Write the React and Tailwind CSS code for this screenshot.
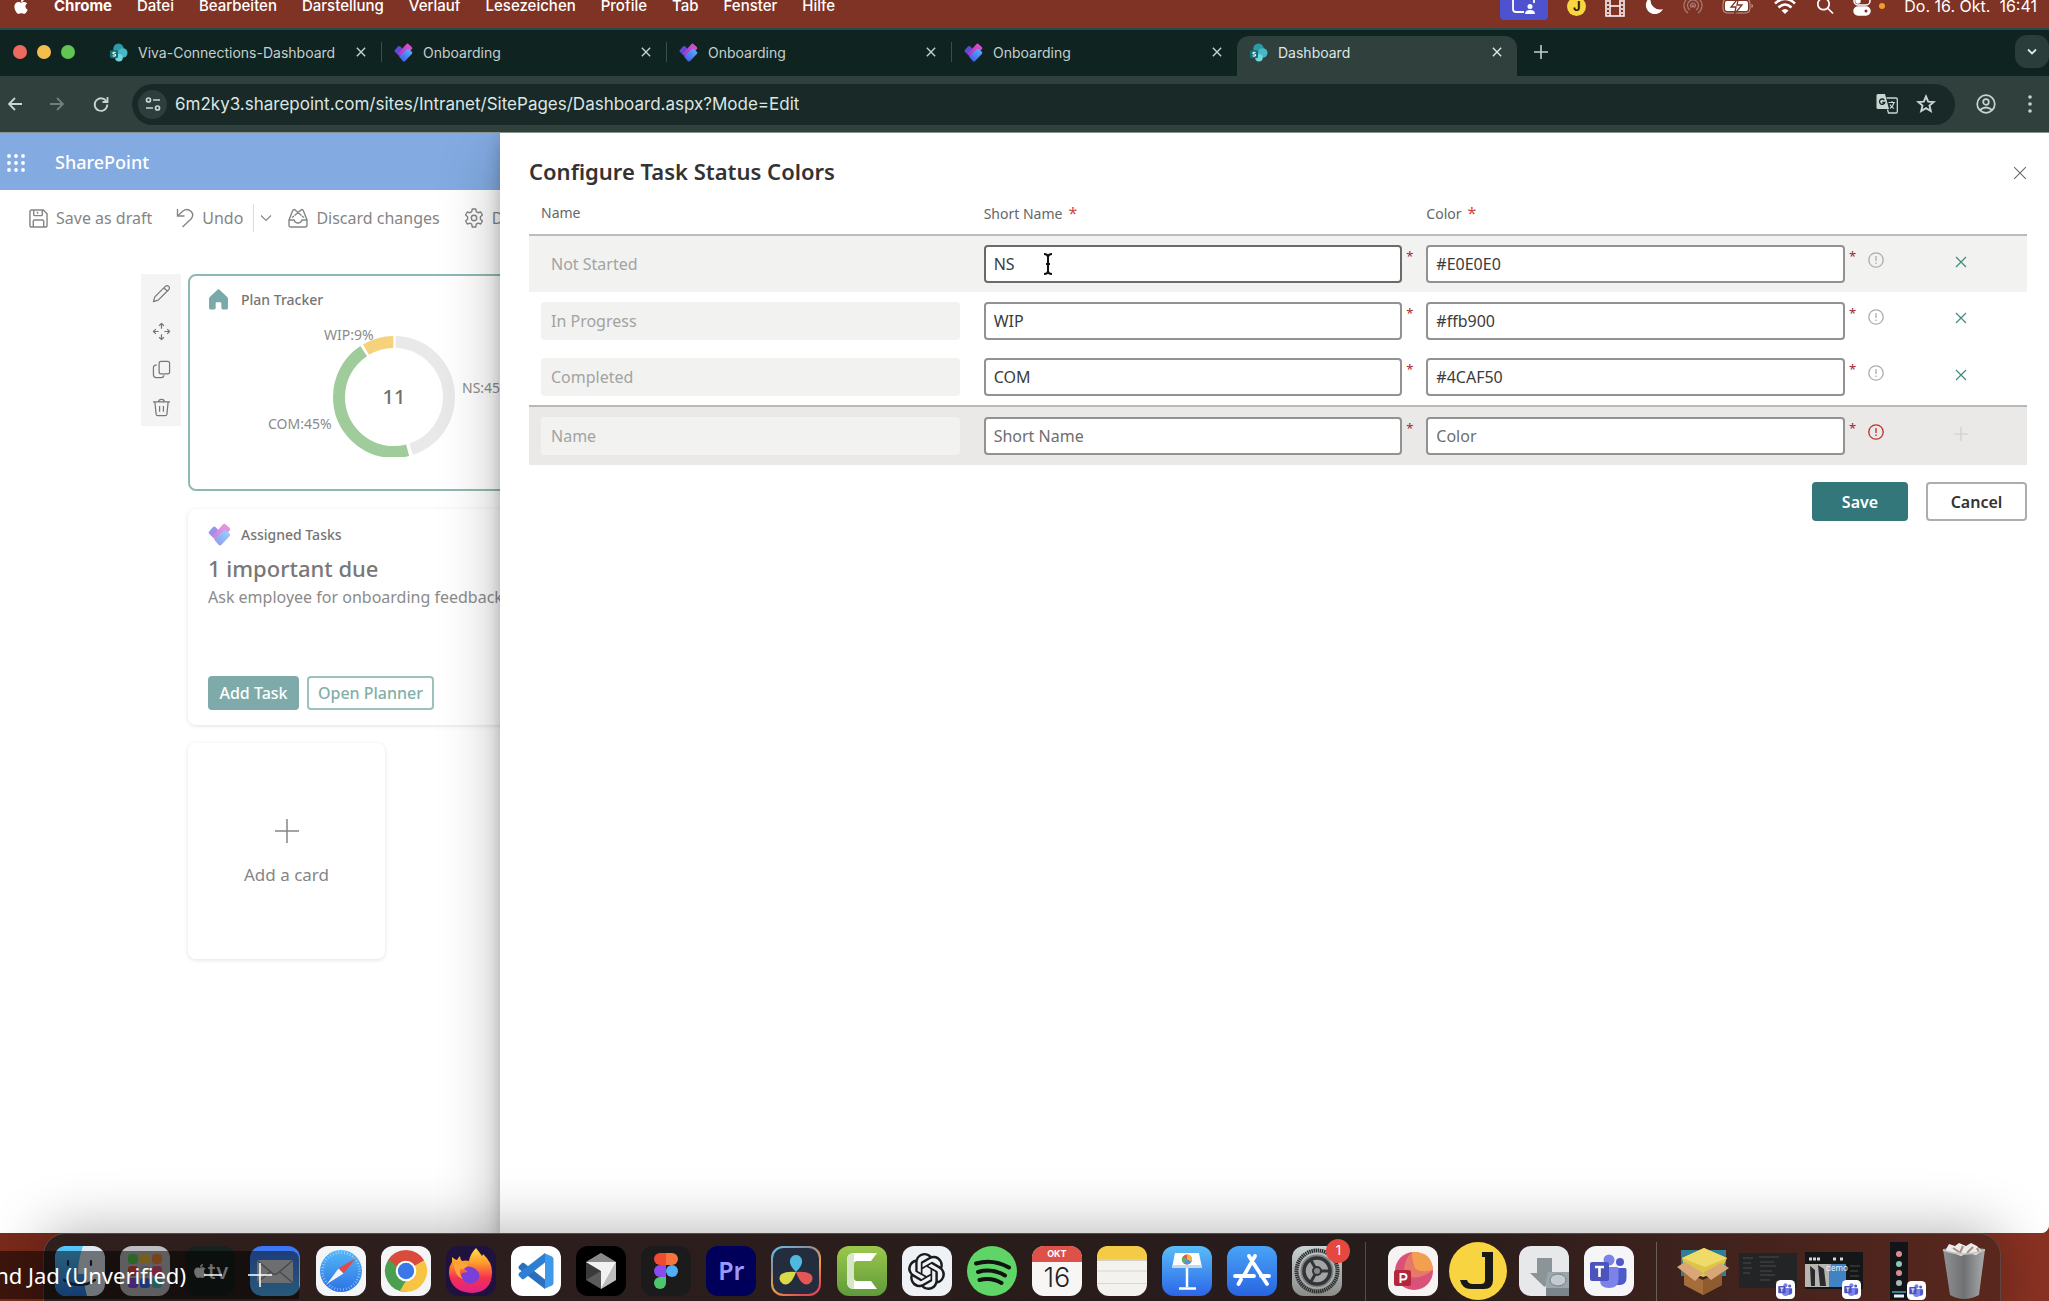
import React from "react";
import { FaApple } from "react-icons/fa";
import { SiOpenai } from "react-icons/si";

const UI = "font-['Noto_Sans','Open_Sans',sans-serif]";
const MAC = "font-['Inter',sans-serif]";

/* ---------- small shared drawings ---------- */

function Cross({ className, w = 1.6 }) {
  return (
    <svg viewBox="0 0 12 12" className={className} fill="none" stroke="currentColor" strokeWidth={w}>
      <path d="M1 1l10 10M11 1L1 11" />
    </svg>
  );
}

function VivaLogo({ id, className }) {
  return (
    <svg viewBox="0 0 24 24" className={className}>
      <defs>
        <linearGradient id={id + "a"} x1="0" y1="0" x2="1" y2="1">
          <stop offset="0" stopColor="#4a5ce0" />
          <stop offset="1" stopColor="#7a2fc9" />
        </linearGradient>
        <linearGradient id={id + "b"} x1="1" y1="0" x2="0" y2="1">
          <stop offset="0" stopColor="#e457c6" />
          <stop offset="1" stopColor="#9a2fd0" />
        </linearGradient>
        <linearGradient id={id + "c"} x1="1" y1="0" x2="0" y2="1">
          <stop offset="0" stopColor="#58b8fb" />
          <stop offset="1" stopColor="#4253e8" />
        </linearGradient>
      </defs>
      <path fill={"url(#" + id + "a)"} d="M1 9l4-4.500q1.500-1.500 3 0l4.500 4.500-6 7.500L1 11q-1-1 0-2z" />
      <path fill={"url(#" + id + "b)"} d="M4.500 14L15.500 1.500q1.500-1.500 3 0l4 3.500q1.300 1.500 0 3L11 20z" />
      <path fill={"url(#" + id + "c)"} d="M7 16.500l9-8.500q1.500-1.300 3 0l3.500 3q1.200 1.400 0 2.800l-8.500 9q-1.500 1.300-3 0L7 18q-.8-.8 0-1.500z" />
    </svg>
  );
}

function SharePointLogo({ className }) {
  return (
    <svg viewBox="0 0 20 20" className={className}>
      <circle cx="10" cy="6" r="5.500" fill="#2f9aa5" />
      <circle cx="14.500" cy="10.500" r="5" fill="#45b9c6" />
      <circle cx="10.500" cy="15.500" r="4" fill="#6fd6de" />
      <rect x="1" y="7.500" width="8.500" height="8.500" rx="1.500" fill="#136f79" />
      <path d="M7 10.200c-.8-.8-3-.8-3 .4 0 1.300 3 .8 3 2.200 0 1.200-2.300 1.300-3.200.4" fill="none" stroke="#fff" strokeWidth="1.100" />
    </svg>
  );
}

/* ---------- macOS menu bar ---------- */

const menus = ["Datei", "Bearbeiten", "Darstellung", "Verlauf", "Lesezeichen", "Profile", "Tab", "Fenster", "Hilfe"];

function MenuBar() {
  return (
    <header className={"h-7 bg-[#7f3325] leading-3 text-white " + MAC}>
      <div className="flex h-3 items-center justify-between pr-3">
        <nav className="flex items-center gap-[25px] pl-3 text-[15px] leading-3 font-medium" aria-label="Menu bar">
          <FaApple className="-mr-px size-[18px]" />
          <button className="font-bold">Chrome</button>
          {menus.map((m) => (
            <button key={m}>{m}</button>
          ))}
        </nav>
        <div className="flex items-center gap-[19px]">
          <span className="flex h-7 w-12 items-center justify-center rounded bg-[#4f52cf]">
            <svg viewBox="0 0 24 20" className="h-5 w-6" fill="none" stroke="#fff" strokeWidth="1.800">
              <path d="M12 16H4q-3 0-3-3V1h21v6" />
              <circle cx="18" cy="10.500" r="2.500" fill="#fff" stroke="none" />
              <path d="M13 18q0-4 5-4t5 4z" fill="#fff" stroke="none" />
            </svg>
          </span>
          <span className="flex size-[19px] items-center justify-center rounded-full bg-[#f8d541] text-[13px] leading-3 font-bold text-[#2a2208]">J</span>
          <svg viewBox="0 0 20 22" className="h-[22px] w-5" fill="none" stroke="#fff" strokeWidth="1.500">
            <path d="M1 1v20h18V1M5 1v20M15 1v20M5 11h10" />
            <path d="M3 1v20M17 1v20" strokeDasharray="2 2" />
          </svg>
          <svg viewBox="0 0 20 20" className="size-5" fill="#fff">
            <path d="M7 1a9 9 0 1 0 12 12A9.500 9.500 0 0 1 7 1z" />
          </svg>
          <svg viewBox="0 0 20 20" className="size-5 opacity-35" fill="none" stroke="#fff" strokeWidth="1.200">
            <path d="M5 17a9 9 0 1 1 10 0M7 14a5.500 5.500 0 1 1 6 0M8.500 11.500a2.500 2.500 0 1 1 3 0" />
            <circle cx="10" cy="10" r="1" fill="#fff" />
          </svg>
          <svg viewBox="0 0 32 18" className="h-[18px] w-8">
            <rect x="1" y="2" width="27" height="14" rx="4" fill="none" stroke="#fff" strokeOpacity=".5" />
            <path d="M29.500 7v4q1.500-.6 1.500-2t-1.500-2z" fill="#fff" fillOpacity=".5" />
            <rect x="3" y="4" width="23" height="10" rx="2" fill="#fff" />
            <path d="M16.500 1L9 10h5l-1.500 7L20 8h-5z" fill="#fff" stroke="#7f3325" strokeWidth="1.300" />
          </svg>
          <svg viewBox="0 0 24 18" className="h-[18px] w-6" fill="none" stroke="#fff" strokeWidth="2.600">
            <path d="M2 6.500Q12-2.500 22 6.500M5.500 10.500q6.500-6 13 0" />
            <path d="M8.500 13.500q3.500-3 7 0L12 17z" fill="#fff" stroke="none" />
          </svg>
          <svg viewBox="0 0 18 18" className="size-[18px]" fill="none" stroke="#fff" strokeWidth="1.700">
            <circle cx="7.500" cy="7" r="5.700" />
            <path d="M12 11.500l5 5" />
          </svg>
          <div className="flex items-center gap-2">
            <svg viewBox="0 0 18 20" className="h-5 w-[18px]" fill="none" stroke="#fff" strokeWidth="1.500">
              <rect x="1" y="1" width="16" height="8" rx="4" />
              <circle cx="5" cy="5" r="2" fill="#fff" />
              <rect x="1" y="11" width="16" height="8" rx="4" fill="#fff" />
              <circle cx="13" cy="15" r="2.300" fill="#7f3325" />
            </svg>
            <span className="size-[6px] rounded-full bg-[#f59a2c]" />
          </div>
          <span className="text-[16px] leading-3 whitespace-pre">Do. 16. Okt.  16:41</span>
        </div>
      </div>
    </header>
  );
}

/* ---------- browser chrome ---------- */

const tabs = [
  { title: "Viva-Connections-Dashboard", icon: "sp", sep: true },
  { title: "Onboarding", icon: "viva", sep: true },
  { title: "Onboarding", icon: "viva", sep: true },
  { title: "Onboarding", icon: "viva" },
  { title: "Dashboard", icon: "sp", active: true },
];

function TabStrip() {
  return (
    <div className="flex h-12 items-end border-t-2 border-[#2c4a4d] bg-[#0f2321] text-[14px] text-[#c3d0cd]">
      <div className="flex h-10 w-[97px] shrink-0 items-start gap-2.5 pt-[9px] pl-[13px]">
        <span className="size-3.5 rounded-full bg-[#ed6a5e]" />
        <span className="size-3.5 rounded-full bg-[#f4be4f]" />
        <span className="size-3.5 rounded-full bg-[#61c554]" />
      </div>
      <div className="flex h-10 min-w-0 shrink" role="tablist">
        {tabs.map((t, i) => (
          <div
            key={i}
            className={
              t.active
                ? "flex w-[280px] rounded-t-xl bg-[#2f403d] pb-2 text-[#dce6e3]"
                : "flex w-[285px] pb-2"
            }
          >
            <button role="tab" aria-selected={!!t.active} className="flex min-w-0 flex-1 items-center gap-2.5 pl-3">
              {t.icon === "sp" ? <SharePointLogo className="size-[19px]" /> : <VivaLogo id={"t" + i} className="size-[19px]" />}
              <span className="truncate">{t.title}</span>
            </button>
            <button aria-label="Close tab" className="flex w-10 items-center justify-center">
              <Cross className="size-2.5" w={1.7} />
            </button>
            {t.sep && <span className="my-1.5 w-px bg-[#33514d]" />}
          </div>
        ))}
      </div>
      <button aria-label="New tab" className="flex h-10 w-12 items-center justify-center pb-2">
        <svg viewBox="0 0 14 14" className="size-3.5" stroke="currentColor" strokeWidth="1.600">
          <path d="M7 0v14M0 7h14" />
        </svg>
      </button>
      <button aria-label="Search tabs" className="mb-2 ml-auto flex h-[33px] w-[34px] items-center justify-center rounded-xl bg-[#2a3d3a]">
        <svg viewBox="0 0 12 8" className="h-2 w-3" fill="none" stroke="#dfe8e6" strokeWidth="1.800">
          <path d="M2 1.500l4 4 4-4" />
        </svg>
      </button>
    </div>
  );
}

function Toolbar() {
  return (
    <div className="flex h-[56px] items-center bg-[#2f403d] text-[#c9d5d2]">
      <div className="flex w-[132px] items-center gap-5 pl-1.5">
        <button aria-label="Back">
          <svg viewBox="0 0 18 18" className="size-[18px]" fill="none" stroke="currentColor" strokeWidth="1.800">
            <path d="M16 9H3M9 3L3 9l6 6" />
          </svg>
        </button>
        <button aria-label="Forward" className="pl-1 text-[#70807c]">
          <svg viewBox="0 0 18 18" className="size-[18px]" fill="none" stroke="currentColor" strokeWidth="1.800">
            <path d="M2 9h13M9 3l6 6-6 6" />
          </svg>
        </button>
        <button aria-label="Reload" className="pl-1.5">
          <svg viewBox="0 0 18 18" className="size-[18px]" fill="none" stroke="currentColor" strokeWidth="1.800">
            <path d="M14.500 6.500A6.300 6.300 0 1 0 15.300 9.500" />
            <path d="M15.500 2v5h-5" />
          </svg>
        </button>
      </div>
      <div className="flex h-[41px] min-w-0 flex-1 items-center rounded-full bg-[#182927] pr-[19px] pl-1.5">
        <span className="flex size-[29px] items-center justify-center rounded-full bg-[#2d3f3c]">
          <svg viewBox="0 0 16 16" className="size-4" fill="none" stroke="currentColor" strokeWidth="1.700">
            <circle cx="3.500" cy="4" r="2" />
            <path d="M8 4h7M1 12h7" />
            <circle cx="12.500" cy="12" r="2" />
          </svg>
        </span>
        <input
          aria-label="Address"
          className={"h-full min-w-0 flex-1 bg-transparent pl-2 text-[17px] text-[#dce6e4] outline-none " + MAC}
          defaultValue="6m2ky3.sharepoint.com/sites/Intranet/SitePages/Dashboard.aspx?Mode=Edit"
        />
        <div className="flex items-center gap-[18px]">
          <svg viewBox="0 0 22 20" className="h-5 w-[22px]">
            <path d="M2 0h7l4 15H2q-1.500 0-1.500-1.500v-12Q.5 0 2 0z" fill="#c9d5d2" />
            <path d="M10.500 4H20q1.300 0 1.300 1.300v12.400Q21.300 19 20 19h-7.500l-1-3.500" fill="none" stroke="#c9d5d2" strokeWidth="1.300" />
            <path d="M8.300 6a2.700 2.700 0 1 0 .5 2.500H6.300" fill="none" stroke="#182927" strokeWidth="1.300" />
            <path d="M12.500 8.500H19M16 7v1.500M18 8.500q-1 4-4 6M14 10.500q1.500 3 4 4" fill="none" stroke="#c9d5d2" strokeWidth="1.200" />
          </svg>
          <button aria-label="Bookmark">
            <svg viewBox="0 0 20 20" className="size-5" fill="none" stroke="currentColor" strokeWidth="1.900">
              <path d="M10 2.500l2.200 5.100 5.500.4-4.200 3.600 1.300 5.400-4.800-2.900L5.200 17l1.300-5.400L2.300 8l5.500-.4z" />
            </svg>
          </button>
        </div>
      </div>
      <div className="flex w-[94px] items-center justify-between pr-[17px] pl-[21px]">
        <button aria-label="Profile">
          <svg viewBox="0 0 20 20" className="size-5" fill="none" stroke="currentColor" strokeWidth="1.700">
            <circle cx="10" cy="10" r="8.800" />
            <circle cx="10" cy="8" r="2.800" />
            <path d="M4 16q6-5 12 0" />
          </svg>
        </button>
        <button aria-label="Menu">
          <svg viewBox="0 0 4 18" className="h-[18px] w-1 fill-current">
            <circle cx="2" cy="2" r="1.800" />
            <circle cx="2" cy="9" r="1.800" />
            <circle cx="2" cy="16" r="1.800" />
          </svg>
        </button>
      </div>
    </div>
  );
}

/* ---------- dashboard behind the panel ---------- */

function CommandBar() {
  return (
    <div className="flex h-[56px] items-center pl-[29px] text-[16px] whitespace-nowrap text-[#858585]">
      <button className="flex items-center gap-2">
        <svg viewBox="0 0 20 20" className="size-[19px]" fill="none" stroke="currentColor" strokeWidth="1.500">
          <path d="M3 1h12l4 4v12q0 2-2 2H3q-2 0-2-2V3q0-2 2-2z" />
          <path d="M5 1v5q0 1 1 1h7q1 0 1-1V1M4.500 19v-6q0-1.500 1.500-1.500h8q1.500 0 1.500 1.500v6M9 3v2" />
        </svg>
        Save as draft
      </button>
      <button className="ml-6 flex items-center gap-2">
        <svg viewBox="0 0 18 20" className="h-5 w-[18px]" fill="none" stroke="currentColor" strokeWidth="1.400">
          <path d="M1.500 1v7h7" />
          <path d="M1.500 8L7 3q4-3.200 8 .3 3.500 3.700 0 7.700L6.500 19" />
        </svg>
        Undo
      </button>
      <button aria-label="More undo options" className="ml-2.5 flex h-7 items-center border-l border-[#dcdcdc] pl-1.5">
        <svg viewBox="0 0 12 8" className="h-2 w-3" fill="none" stroke="currentColor" strokeWidth="1.100">
          <path d="M1 1.500l5 5 5-5" />
        </svg>
      </button>
      <button className="ml-4 flex items-center gap-2">
        <svg viewBox="0 0 20 20" className="size-5" fill="none" stroke="currentColor" strokeWidth="1.400">
          <path d="M1 12L4.500 3Q5 1.500 6.500 1.500M19 12L15.500 3q-.5-1.500-2-1.500M6.500 1.500l7 6M13.500 1.500l-7 6M1 12h5q1 3 4 3t4-3h5v5q0 2-2 2H3q-2 0-2-2zM4 9.500l2-1.500M16 9.500L14 8" />
        </svg>
        Discard changes
      </button>
      <button className="ml-6 flex items-center gap-2">
        <svg viewBox="0 0 20 20" className="size-5" fill="none" stroke="currentColor" strokeWidth="1.400">
          <path d="M8.300 1h3.400l.6 2.700 1.700 1L16.700 4l1.700 3-2 1.800v2.400l2 1.800-1.700 3-2.700-.8-1.700 1-.6 2.800H8.300l-.6-2.800-1.700-1-2.700.8-1.700-3 2-1.800V8.800L1.600 7l1.700-3 2.700.7 1.700-1z" strokeLinejoin="round" />
          <circle cx="10" cy="10" r="2.700" />
        </svg>
        D
      </button>
    </div>
  );
}

const cardTools = [
  { label: "Edit", d: "M1.500 18.500l1.500-5L14 2.500q1.800-1.500 3.500 0t0 3.500L6.500 17zM12.500 4l3.500 3.500" },
  { label: "Move", d: "M10 1.500v5.500M10 13v5.500M1.500 10H7M13 10h5.500M7.500 4L10 1.500 12.500 4M7.500 16l2.500 2.500 2.500-2.500M4 7.500L1.500 10 4 12.500M16 7.500l2.500 2.500-2.500 2.500" },
  { label: "Duplicate", d: "M9.500 1.500h7q2 0 2 2v9q0 2-2 2h-7q-2 0-2-2v-9q0-2 2-2zM5 5.500H4q-2.500 0-2.500 2.500v7.500q0 3 3 3h5q3 0 3-2.500" },
  { label: "Delete", d: "M1 4h18M7 4q0-2.500 3-2.500T13 4M3 4l1.300 13q.2 1.500 1.700 1.500h8q1.500 0 1.700-1.500L17 4M8 8.500v6M12 8.500v6" },
];

function Ring() {
  return (
    <svg viewBox="0 0 293 140" className="mt-[7px] h-[140px] w-[293px]" fill="none" strokeWidth="12" role="img" aria-label="Task status">
      <circle cx="186" cy="80" r="55" stroke="#e9e9e9" pathLength="100" strokeDasharray="44.400 55.600" strokeDashoffset="-.5" transform="rotate(-90 186 80)" />
      <circle cx="186" cy="80" r="55" stroke="#a0cc9b" pathLength="100" strokeDasharray="44.700 55.300" strokeDashoffset="-46" transform="rotate(-90 186 80)" />
      <circle cx="186" cy="80" r="55" stroke="#f6d27c" pathLength="100" strokeDasharray="8.300 91.700" strokeDashoffset="-91.500" transform="rotate(-90 186 80)" />
      <g stroke="none" fill="#8b8b8b" fontSize="14">
        <text x="116" y="23">WIP:9%</text>
        <text x="60" y="112">COM:45%</text>
        <text x="254" y="76">NS:45%</text>
        <text x="186" y="87" fontSize="20" fontWeight="500" fill="#6f6f6f" textAnchor="middle">11</text>
      </g>
    </svg>
  );
}

function Dashboard() {
  return (
    <section className={"w-[500px] shrink-0 overflow-hidden bg-white " + UI}>
      <div className="flex h-[57px] items-center gap-[30px] bg-[#83abe2] pt-0.5 pl-[7px] text-white">
        <svg viewBox="0 0 18 18" className="size-[18px]" fill="#fff">
          {[2, 9, 16].map((x) => [2, 9, 16].map((y) => <circle key={x + "-" + y} cx={x} cy={y} r="1.900" />))}
        </svg>
        <span className="text-[18px] font-medium">SharePoint</span>
      </div>
      <CommandBar />
      <div className="flex items-start gap-[7px] pt-7 pl-[141px]">
        <div className="flex w-10 shrink-0 flex-col items-center bg-[#f4f4f4]">
          {cardTools.map((t) => (
            <button key={t.label} aria-label={t.label} className="flex h-[38px] items-center text-[#777]">
              <svg viewBox="0 0 20 20" className="size-[19px]" fill="none" stroke="currentColor" strokeWidth="1.300" strokeLinejoin="round">
                <path d={t.d} />
              </svg>
            </button>
          ))}
        </div>
        <div className="flex w-[413px] shrink-0 flex-col gap-[18px]">
          <article className="h-[217px] rounded-lg border-2 border-[#8fb8b2] pt-[13px] pl-[18px]">
            <h3 className="flex items-center gap-3 text-[14px] font-medium text-[#757575]">
              <svg viewBox="0 0 20 20" className="size-[21px]" fill="#7aa9aa">
                <path d="M9 .8q1-.9 2 0l7.300 6.700q.7.700.7 1.700V18q0 1.500-1.500 1.500H14q-1.300 0-1.300-1.300V13.500q0-1-1-1H8.300q-1 0-1 1v4.700Q7.300 19.500 6 19.500H2.500Q1 19.500 1 18V9.200q0-1 .7-1.700z" />
              </svg>
              Plan Tracker
            </h3>
            <Ring />
          </article>
          <article className="h-[216px] rounded-lg px-5 pt-3.5 shadow-[0_1px_4px_rgba(0,0,0,0.12)]">
            <h3 className="flex items-center gap-2.5 text-[14px] font-medium text-[#757575]">
              <VivaLogo id="card" className="size-[23px] opacity-60" />
              Assigned Tasks
            </h3>
            <p className="mt-1.5 text-[22px] leading-[32px] font-medium text-[#787878]">1 important due</p>
            <p className="text-[16px] leading-[26px] text-[#8b8b8b]">Ask employee for onboarding feedback</p>
            <div className="mt-[66px] flex gap-2">
              <button className="h-[34px] w-[91px] rounded bg-[#7eaaaa] text-[16px] font-medium text-white">Add Task</button>
              <button className="h-[34px] w-[127px] rounded border-2 border-[#9dc1bc] text-[16px] font-medium text-[#82afa8]">Open Planner</button>
            </div>
          </article>
          <button className="flex h-[216px] w-[197px] flex-col items-center gap-[19px] rounded-lg pt-[76px] text-[17px] text-[#858585] shadow-[0_1px_4px_rgba(0,0,0,0.12)]">
            <svg viewBox="0 0 24 24" className="size-6" stroke="currentColor" strokeWidth="1.500">
              <path d="M12 0v24M0 12h24" />
            </svg>
            Add a card
          </button>
        </div>
      </div>
    </section>
  );
}

/* ---------- property panel ---------- */

const rows = [
  { name: "Not Started", short: "NS", color: "#E0E0E0", hover: true },
  { name: "In Progress", short: "WIP", color: "#ffb900" },
  { name: "Completed", short: "COM", color: "#4CAF50" },
];

const field = "h-[38px] min-w-0 flex-1 rounded-sm border-2 px-2 text-[16px] outline-none ";

function Star({ head }) {
  return head ? (
    <span className="ml-1.5 text-[16px] text-[#d4453a]">*</span>
  ) : (
    <span className="w-3 shrink-0 self-start pl-1 text-[13px] leading-[22px] text-[#a4262c]">*</span>
  );
}

function Info({ className }) {
  return (
    <svg viewBox="0 0 16 16" className={"size-4 " + className} fill="none" stroke="currentColor" strokeWidth="1.300">
      <circle cx="8" cy="8" r="7.200" />
      <path d="M8 4v5M8 10.500v1.500" />
    </svg>
  );
}

function Field({ label, value, placeholder, strong }) {
  return (
    <td className="p-0">
      <div className="flex pl-3">
        <input
          aria-label={label}
          className={field + "bg-white text-[#3b3b3b] placeholder:text-[#6e6e6e] " + (strong ? "border-[#6a6a6a]" : "border-[#929292]")}
          defaultValue={value}
          placeholder={placeholder}
        />
        <Star />
      </div>
    </td>
  );
}

function NameField({ value, placeholder }) {
  return (
    <td className="p-0">
      <div className="flex px-3">
        <input
          aria-label="Name"
          disabled
          className={field + "border-transparent bg-[#f2f2f1] text-[#a3a3a1] placeholder:text-[#a3a3a1]"}
          defaultValue={value}
          placeholder={placeholder}
        />
      </div>
    </td>
  );
}

function Panel() {
  return (
    <section
      role="dialog"
      aria-labelledby="panel-title"
      className={"relative min-w-0 flex-1 bg-white pr-[22px] pl-[29px] shadow-[0_24px_56px_rgba(0,0,0,0.28),0_4px_14px_rgba(0,0,0,0.2)] " + UI}
    >
      <div className="flex items-center justify-between pt-[22px]">
        <h2 id="panel-title" className="text-[22px] leading-[32px] font-semibold text-[#333]">Configure Task Status Colors</h2>
        <button aria-label="Close" className="pt-1 text-[#666]">
          <Cross className="size-3.5" w={0.9} />
        </button>
      </div>
      <table className="w-full table-fixed border-collapse text-left">
        <colgroup>
          <col />
          <col />
          <col />
          <col className="w-[38px]" />
          <col className="w-[132px]" />
        </colgroup>
        <thead>
          <tr className="h-12 border-b-2 border-[#bcbcba] text-[14px] leading-5 text-[#666]">
            <th className="pt-1 pl-3 align-middle font-normal">Name</th>
            <th className="pt-1.5 pl-3 align-middle font-normal">Short Name<Star head /></th>
            <th className="pt-1.5 pl-3 align-middle font-normal">Color<Star head /></th>
            <td />
            <td />
          </tr>
        </thead>
        <tbody>
          {rows.map((r) => (
            <tr key={r.name} className={"h-[57px] " + (r.hover ? "bg-[#f2f2f1]" : "")}>
              <NameField value={r.name} />
              <Field label="Short Name" value={r.short} strong={r.hover} />
              <Field label="Color" value={r.color} />
              <td className="pb-2 pl-[11px]">
                <Info className="text-[#adadad]" />
              </td>
              <td className="pb-2 text-center">
                <button aria-label={"Remove " + r.name} className="align-middle text-[#3f8a80]">
                  <Cross className="size-3" w={1.2} />
                </button>
              </td>
            </tr>
          ))}
        </tbody>
        <tfoot>
          <tr className="h-[59px] border-t-2 border-[#bab8b6] bg-[#ebe9e8]">
            <NameField placeholder="Name" />
            <Field label="Short Name" placeholder="Short Name" />
            <Field label="Color" placeholder="Color" />
            <td className="pb-2 pl-[11px]">
              <Info className="text-[#bb2d2a]" />
            </td>
            <td className="pb-2 text-center">
              <button aria-label="Add row" disabled className="align-middle text-[#cfcdcc]">
                <svg viewBox="0 0 14 14" className="size-3.5" stroke="currentColor" strokeWidth="1.200">
                  <path d="M7 0v14M0 7h14" />
                </svg>
              </button>
            </td>
          </tr>
        </tfoot>
      </table>
      <div className="mt-[17px] flex justify-end gap-[18px] text-[16px] font-semibold">
        <button className="h-[39px] w-24 rounded-sm bg-[#33777a] text-white">Save</button>
        <button className="h-[39px] w-[101px] rounded-sm border-2 border-[#adadad] bg-white text-[#333]">Cancel</button>
      </div>
    </section>
  );
}

/* ---------- dock ---------- */

function Tile({ bg = "#f4f5f7", children }) {
  return (
    <svg viewBox="0 0 50 50" className="size-[50px] shrink-0">
      <rect width="50" height="50" rx="12" fill={bg} />
      {children}
    </svg>
  );
}

function Grad({ id, stops, x2 = 0, y2 = 1 }) {
  return (
    <linearGradient id={id} x1="0" y1="0" x2={x2} y2={y2}>
      {stops.map((c, i) => (
        <stop key={i} offset={i / (stops.length - 1)} stopColor={c} />
      ))}
    </linearGradient>
  );
}

function TeamsGlyph() {
  return (
    <g>
      <circle cx="36" cy="16" r="4" fill="#5059c9" />
      <path d="M30 22h11q1.500 0 1.500 1.500V32q0 6-6 7h-5z" fill="#5059c9" />
      <circle cx="25" cy="14" r="5.500" fill="#7b83eb" />
      <path d="M16 21h17q1.500 0 1.500 1.500V33q0 9-9.500 9T16 33z" fill="#7b83eb" />
      <rect x="6" y="16" width="19" height="19" rx="2" fill="#4b53bc" />
      <path d="M11 21h9M15.500 21v10" stroke="#fff" strokeWidth="2.600" />
    </g>
  );
}

function MiniTeams({ className }) {
  return (
    <svg viewBox="0 0 50 50" className={"absolute size-[19px] " + className}>
      <rect width="50" height="50" rx="12" fill="#fff" />
      <TeamsGlyph />
    </svg>
  );
}

function Finder() {
  return (
    <Tile bg="#dfe9f2">
      <defs><Grad id="fi" stops={["#55c8fb", "#2a7be0"]} /></defs>
      <path d="M12 0h16q-5 14-5 28h6q0 12 3 22H12Q0 50 0 38V12Q0 0 12 0z" fill="url(#fi)" />
      <path d="M13 15v4M36 15v4M9 34q16 10 31 0" stroke="#1b2c45" strokeWidth="2.200" fill="none" strokeLinecap="round" />
    </Tile>
  );
}
function Launchpad() {
  const c = ["#5ccb54", "#f0bd39", "#ee8a34", "#e84a3f", "#ababab", "#e94f7c", "#8c4ce0", "#3f6df0", "#4fb8c5"];
  return (
    <Tile bg="#bdbcc0">
      {c.map((f, i) => <rect key={i} x={8 + (i % 3) * 12} y={8 + Math.floor(i / 3) * 12} width="10" height="10" rx="3" fill={f} />)}
    </Tile>
  );
}
function AppleTv() {
  return (
    <span className={"flex size-[50px] shrink-0 items-center justify-center rounded-xl bg-[#17211f] text-[22px] font-medium text-[#e0e0e0] " + MAC}>
      <FaApple className="size-4" />tv
    </span>
  );
}
function Mail() {
  return (
    <Tile bg="url(#ml)">
      <defs><Grad id="ml" stops={["#3b74f6", "#4fb3f2"]} /></defs>
      <rect x="7" y="14" width="36" height="23" rx="2.500" fill="#d9dcdf" />
      <path d="M8 15l14 12q3 2.500 6 0l14-12M8 36l12-10M42 36L30 26" fill="none" stroke="#8f959b" strokeWidth="1.500" />
    </Tile>
  );
}
function Safari() {
  return (
    <Tile>
      <defs><Grad id="sf" stops={["#55b7f7", "#2b72e4"]} /></defs>
      <circle cx="25" cy="25" r="21" fill="url(#sf)" />
      <circle cx="25" cy="25" r="18.500" fill="none" stroke="#fff" strokeOpacity=".6" strokeWidth="2.500" strokeDasharray=".7 2.200" />
      <path d="M40 12L22.500 22.500l5 5z" fill="#e8483f" />
      <path d="M11 38l11.500-15.500 5 5z" fill="#f4f4f4" />
    </Tile>
  );
}
function Chrome() {
  return (
    <Tile>
      <path d="M25 25L6.800 14.500A21 21 0 0 1 43.200 14.500z" fill="#db4b3d" />
      <path d="M25 25L43.200 14.500A21 21 0 0 1 25 46z" fill="#f7c443" />
      <path d="M25 25L25 46A21 21 0 0 1 6.800 14.500z" fill="#4c9f50" />
      <path d="M34 30L25 46q-4-.2-6-1.200L26 33z" fill="#f7c443" />
      <path d="M15.900 30.200L6.800 14.500 25 15z" fill="#4c9f50" />
      <path d="M8 13h17l18.200 1.500H25a10.500 10.500 0 0 0-9.500 6z" fill="#db4b3d" />
      <circle cx="25" cy="25" r="10.300" fill="#fff" />
      <circle cx="25" cy="25" r="8.200" fill="#3b78e7" />
    </Tile>
  );
}
function Firefox() {
  return (
    <Tile bg="#20123f">
      <defs><Grad id="ff" stops={["#ffe14d", "#ff9a2b", "#f5314f", "#e0208a"]} /></defs>
      <path d="M30 2q4 5 6 8 1-1 1-2 10 9 9 20-1 18-20 19Q5 46 3 28q-.500-7 3-12v-5q3 3 5 3 1-2 3-4 0 3 2 5 4-1 7 0Q24 8 30 2z" fill="url(#ff)" />
      <path d="M17 22q6-3 11 0 8 5 4 12-6 6-13 2-5-4-3-9l6-1z" fill="#7a3fd8" />
      <path d="M8 17q8-3 14 2-3 5-8 4-1 6 3 10-9-3-9-16z" fill="#ffa436" />
    </Tile>
  );
}
function VsCode() {
  return (
    <Tile bg="#fff">
      <path d="M8 20l3-3q1-.7 2 0L34 33.500V43L8 23q-1-1.500 0-3z" fill="#2a6fbd" />
      <path d="M8 30l3 3q1 .7 2 0L34 16.500V7L8 27q-1 1.500 0 3z" fill="#2d7fd3" />
      <path d="M33 7l8 3.500q1.500 1 1.500 2.500v24q0 1.500-1.500 2.500L33 43q1-1 1-2V9q0-1-1-2z" fill="#3f98e8" />
    </Tile>
  );
}
function CursorApp() {
  return (
    <Tile bg="#000">
      <path d="M25 7l15 9v18l-15 9-15-9V16z" fill="#5b5b5b" />
      <path d="M25 7l15 9H10z" fill="#8a8a8a" />
      <path d="M25 25L10 16v18z" fill="#3a3a3a" />
      <path d="M40 16v18l-15 9z" fill="#bdbdbd" />
      <path d="M10 16h30L25 43V25z" fill="#f1f1f1" />
    </Tile>
  );
}
function Figma() {
  return (
    <Tile bg="#1b1b1b">
      <path d="M25 7h-6a6 6 0 0 0 0 12h6z" fill="#ee4b30" />
      <path d="M25 7h6a6 6 0 0 1 0 12h-6z" fill="#f5743f" />
      <path d="M25 19h-6a6 6 0 0 0 0 12h6z" fill="#8a4bf0" />
      <circle cx="31" cy="25" r="6" fill="#4fb0f7" />
      <path d="M25 31h-6a6 6 0 1 0 6 6z" fill="#4dc76b" />
    </Tile>
  );
}
function Premiere() {
  return <span className={"flex size-[50px] shrink-0 items-center justify-center rounded-xl bg-[#00005b] text-[25px] font-semibold text-[#9a99fb] " + UI}>Pr</span>;
}
function Resolve() {
  return (
    <Tile bg="url(#dv)">
      <defs><Grad id="dv" stops={["#5fc7ee", "#8a8fa0", "#f0a13c", "#e04b5a"]} x2={0.6} /></defs>
      <rect x="2" y="2" width="46" height="46" rx="10.500" fill="#232d3e" />
      <path d="M25 26q-7-7-6-12 1.500-5 6-5t6 5q1 5-6 12z" fill="#4fb9e0" />
      <path d="M25 26q-3 9-8 12-5 1.500-7.500-2.500t1-7.500q5-3 14.500-2z" fill="#d9d94a" />
      <path d="M25 26q3 9 8 12 5 1.500 7.500-2.500t-1-7.500q-5-3-14.500-2z" fill="#e55757" />
    </Tile>
  );
}
function Camtasia() {
  return (
    <Tile bg="url(#cm)">
      <defs><Grad id="cm" stops={["#9cc84b", "#5f9a3b"]} /></defs>
      <path d="M40 7L34 15H20q-3 0-3 3v14q0 3 3 3h14l6 8H17q-7 0-7-7V14q0-7 7-7z" fill="#fff" />
      <path d="M17 7v36q-7 0-7-7V14q0-7 7-7z" fill="#d6e6c6" />
    </Tile>
  );
}
function ChatGpt() {
  return (
    <span className="flex size-[50px] shrink-0 items-center justify-center rounded-xl bg-[#eef1f6]">
      <SiOpenai className="size-[37px] text-[#1b1b1b]" />
    </span>
  );
}
function Spotify() {
  return (
    <svg viewBox="0 0 50 50" className="size-[50px] shrink-0">
      <circle cx="25" cy="25" r="25" fill="#5fd467" />
      <path d="M9 17.500q17-5 33 4M11 26q14-4 27 3.500M12.500 34q12-3 22 3" fill="none" stroke="#121212" strokeWidth="4" strokeLinecap="round" />
    </svg>
  );
}
function Calendar() {
  return (
    <span className={"flex size-[50px] shrink-0 flex-col overflow-hidden rounded-xl bg-[#f7f6f4] text-center " + MAC}>
      <span className="bg-[#dd5148] text-[9px] leading-[16px] font-bold text-white">OKT</span>
      <span className="text-[27px] leading-[32px] font-light text-[#222]">16</span>
    </span>
  );
}
function Notes() {
  return (
    <Tile bg="#f3f2ef">
      <path d="M0 13v-1Q0 0 12 0h26q12 0 12 12v1z" fill="#f5ca45" />
      <path d="M0 14h50" stroke="#c7c3b8" strokeWidth="1.500" />
      <path d="M0 25h50M0 37.500h50" stroke="#d8d6d2" />
    </Tile>
  );
}
function Keynote() {
  return (
    <Tile bg="url(#kn)">
      <defs><Grad id="kn" stops={["#58bdf8", "#2c66e8"]} /></defs>
      <path d="M13 7h24l3 15H10z" fill="#fff" />
      <path d="M10 19h30v3H10z" fill="#c9d6e4" />
      <circle cx="25" cy="13.500" r="5" fill="#e9534c" />
      <path d="M25 13.500v-5a5 5 0 0 1 4.500 7.200z" fill="#f2b33f" />
      <path d="M25 13.500l4.500 2.200a5 5 0 0 1-8 1.500z" fill="#4a93e8" />
      <path d="M25 13.500l-3.500 3.700a5 5 0 0 1-.5-7z" fill="#55b95b" />
      <path d="M25 22v19M17 42.500h17" stroke="#fff" strokeWidth="2.500" />
    </Tile>
  );
}
function AppStore() {
  return (
    <Tile bg="url(#as)">
      <defs><Grad id="as" stops={["#48a4f7", "#2864e0"]} /></defs>
      <path d="M28 10L17 29.500M22 10l3 5 15 23M8 30h19M34 30h8M14 33.500L11.500 38" stroke="#fff" strokeWidth="3.800" strokeLinecap="round" fill="none" />
    </Tile>
  );
}
function Settings() {
  return (
    <span className="relative shrink-0">
      <Tile bg="url(#st)">
        <defs><Grad id="st" stops={["#c9d3d4", "#8b8c88"]} /></defs>
        <circle cx="25" cy="25" r="20.500" fill="none" stroke="#2d2e30" strokeWidth="4" strokeDasharray="1.500 .6" />
        <circle cx="25" cy="25" r="17" fill="#7d7f80" stroke="#b5b7b8" />
        <circle cx="25" cy="25" r="13" fill="#a2a4a5" stroke="#333436" strokeWidth="3.500" />
        <path d="M25 25h13M25 25l-6.500-11.500M25 25l-6.500 11.500" stroke="#333436" strokeWidth="3" />
        <circle cx="25" cy="25" r="4" fill="#85878a" stroke="#333436" strokeWidth="2" />
      </Tile>
      <span className={"absolute -top-[7px] -right-2 flex size-6 items-center justify-center rounded-full bg-[#e5483f] text-[13px] text-white " + MAC}>1</span>
    </span>
  );
}
function Pitch() {
  return (
    <Tile bg="#f5f3f3">
      <circle cx="26" cy="25" r="19" fill="#d9527a" />
      <path d="M24 6q20-1 21 18-10 4-18-1-4-9-3-17z" fill="#f2a04f" />
      <path d="M24 6q-1 9 3 17 8 5 18 1-8 6-14 7-10 2-15-6 0-12 8-19z" fill="#e8786a" />
      <rect x="6" y="24" width="17" height="16" rx="2.500" fill="#b5263a" />
      <path d="M12.500 37V28h3q3 0 3 2.700t-3 2.700h-3" stroke="#fff" strokeWidth="2" fill="none" />
    </Tile>
  );
}
function JApp() {
  return (
    <svg viewBox="0 0 58 58" className="-mx-1 size-[58px] shrink-0">
      <circle cx="29" cy="29" r="29" fill="#f8d440" />
      <path d="M33 10h11v28q0 9-9 9H22q-9 0-11-9h7q1 4 6 4h8q4 0 4-4V15h-3z" fill="#191a18" />
    </svg>
  );
}
function Downloads() {
  return (
    <Tile bg="#e6e8ea">
      <path d="M18 12h15v15h7L25.500 41 11 27h7z" fill="#8b9496" />
      <path d="M29 26h21l2 10v13H27V36z" fill="#9ba6ac" />
      <rect x="27" y="42" width="24" height="8" fill="#7b868c" />
      <ellipse cx="39" cy="34" rx="8" ry="6" fill="#c3cbd0" stroke="#75808a" />
    </Tile>
  );
}
function BoxApp() {
  return (
    <svg viewBox="0 0 54 50" className="-mx-0.5 h-[50px] w-[54px] shrink-0">
      <path d="M5 4h45v26H5z" fill="#2f7f95" />
      <path d="M8 26l19 8 19-8v13L27 49 8 39z" fill="#a56c3c" />
      <path d="M27 34l19-8v13L27 49z" fill="#8f5c30" />
      <path d="M6 12l22-10 23 10-6 13-18 6-18-7z" fill="#dcc548" />
      <path d="M28 2l23 10-22 9L6 12z" fill="#efdc68" />
      <path d="M1 21l8-5 18 11-8 8zM27 27l18-10 8 5-18 12z" fill="#d9a678" />
    </svg>
  );
}
function WindowThumb() {
  return (
    <span className="relative -mx-1 shrink-0">
      <svg viewBox="0 0 58 50" className="h-[50px] w-[58px]">
        <rect y="7" width="58" height="35" fill="#232425" />
        <path d="M4 12h10M4 17h8M4 22h9M4 27h7M20 11h20M21 16h14M21 20h16M21 25h12M21 29h15M21 34h10" stroke="#4a4b4d" />
      </svg>
      <MiniTeams className="right-0.5 -bottom-[3px]" />
    </span>
  );
}
function DemoThumb() {
  return (
    <span className="relative -mx-1 shrink-0">
      <svg viewBox="0 0 58 50" className="h-[50px] w-[58px]">
        <rect y="6" width="58" height="37" fill="#151617" />
        <path d="M4 13h3M8 13h3M12 13h3M28 13h3M35 13h3" stroke="#d5d5d5" strokeWidth="3" />
        <rect y="18" width="24" height="23" fill="#b9b6b0" />
        <path d="M5 20l5 4v16H6zM13 19l6 4 2 17h-6z" fill="#2b2c30" />
        <rect x="24" y="18" width="17" height="23" fill="#3f83c4" />
        <text x="21" y="25" fontSize="8" fill="#e8f1fa">demo</text>
        <path d="M45 20h10M45 25h8M45 30h9" stroke="#4a4b4d" />
      </svg>
      <MiniTeams className="right-0.5 -bottom-[3px]" />
    </span>
  );
}
function PhoneThumb() {
  return (
    <span className="relative flex w-[50px] shrink-0 justify-center">
      <svg viewBox="0 0 18 58" className="h-[58px] w-[18px]">
        <rect width="18" height="58" fill="#121517" />
        <circle cx="9" cy="12" r="3" fill="#d98c92" />
        <circle cx="9" cy="22" r="3" fill="#8fc5b4" />
        <circle cx="9" cy="31" r="3" fill="#d98c92" />
        <circle cx="9" cy="41" r="3" fill="#a9b9b6" />
        <path d="M2 50h14" stroke="#3c7d92" strokeWidth="2" />
        <path d="M4 54h10" stroke="#e8f2f4" strokeWidth="3" />
      </svg>
      <MiniTeams className="-right-0.5 bottom-0" />
    </span>
  );
}
function Trash() {
  return (
    <svg viewBox="0 0 50 58" className="h-[58px] w-[50px] shrink-0">
      <defs><Grad id="tr" stops={["#8f9192", "#6f7172", "#a9abac"]} x2={1} y2={0} /></defs>
      <path d="M4 7q20-4 42 0l-6 46q-15 8-29 0z" fill="url(#tr)" />
      <path d="M6 9l4-7 6 2 4-3 7 3 5-3 6 3 5 5-6 4-8-2-7 3-8-3z" fill="#ecebe9" />
      <path d="M14 6l6 4M24 4l-3 7M34 5l-6 6M38 6l2 4" stroke="#a58d85" strokeWidth="2" />
      <path d="M4 8q21 8 42 0" fill="none" stroke="#bfc1c2" strokeWidth="1.500" />
    </svg>
  );
}

const group = "flex items-center justify-between";

function Dock() {
  return (
    <footer className="relative h-[68px] bg-linear-to-r from-[#7a2a1a] via-[#5c2419] to-[#8a3222] pr-12 pl-[43px]">
      <div className="grid h-[90px] grid-cols-[1289fr_45fr_247fr_44fr_311fr] items-start rounded-[22px] border border-[#5d4642] bg-linear-to-r from-[#2f1f1d] via-[#261c1b] via-70% to-[#5a271d] px-[11px] pt-2 shadow-[0_0_60px_rgba(0,0,0,0.32)] [clip-path:inset(-70px_-60px_22px_-60px)]">
        <div className={group + " h-[58px]"}>
          <Finder /><Launchpad /><AppleTv /><Mail /><Safari /><Chrome /><Firefox /><VsCode /><CursorApp /><Figma />
          <Premiere /><Resolve /><Camtasia /><ChatGpt /><Spotify /><Calendar /><Notes /><Keynote /><AppStore /><Settings />
        </div>
        <span className="h-[60px] w-px justify-self-center bg-[#574b49]" />
        <div className={group + " h-[58px]"}>
          <Pitch /><JApp /><Downloads />
          <Tile bg="#f6f6f8"><TeamsGlyph /></Tile>
        </div>
        <span className="h-[60px] w-px justify-self-center bg-[#6b5c59]" />
        <div className={group + " h-[58px]"}>
          <BoxApp /><WindowThumb /><DemoThumb /><PhoneThumb /><Trash />
        </div>
      </div>
      <div className={"absolute bottom-0.5 left-0 flex h-12 w-[299px] items-center gap-[18px] rounded-tr-lg bg-black/50 text-white " + UI}>
        <span className="flex w-[186px] justify-end text-[22px] whitespace-nowrap">nd Jad (Unverified)</span>
        <svg viewBox="0 0 72 24" className="h-6 w-[72px] shrink-0" stroke="#fff" strokeWidth="1.500">
          <path d="M0 12h18M44 12h24M56 0v24" />
        </svg>
      </div>
    </footer>
  );
}

/* ---------- page ---------- */

export default function App() {
  return (
    <div className="flex min-h-screen flex-col overflow-hidden bg-[#7f3325]">
      <MenuBar />
      <div className={MAC}>
        <TabStrip />
        <Toolbar />
      </div>
      <main className="relative flex flex-1 overflow-hidden rounded-br-lg border-t border-[#8a9391] bg-white">
        <Dashboard />
        <Panel />
        <svg viewBox="0 0 10 24" className="pointer-events-none absolute top-[119px] left-[1043px] h-6 w-2.5" fill="none" stroke="#111" strokeWidth="2">
          <path d="M1 2q4 0 4 3.500v13Q5 22 1 22M9 2Q5 2 5 5.500v13Q5 22 9 22M3 12h4" />
        </svg>
      </main>
      <Dock />
    </div>
  );
}
